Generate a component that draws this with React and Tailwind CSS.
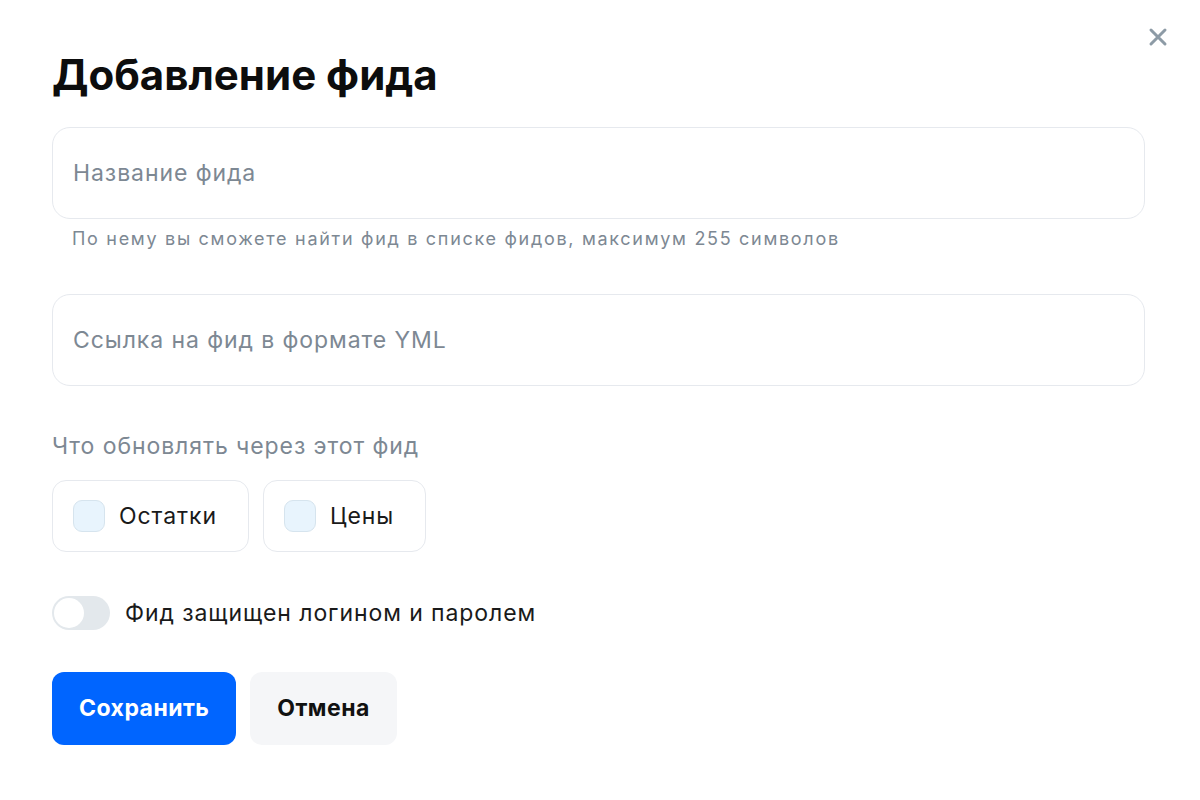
import { useState } from "react";

const Field = ({ placeholder, hint }) => (
  <div className="flex flex-col">
    <input
      placeholder={placeholder}
      className="h-[92px] w-full rounded-[18px] border border-[#e6e9ee] bg-white px-5 text-[23px] tracking-[0.04em] text-[#1a1a1a] outline-none placeholder:text-[#7d8893]"
    />
    {hint ? (
      <p className="mt-[10px] pl-5 text-[18px] leading-5 tracking-[1.7px] text-[#7d8893]">{hint}</p>
    ) : null}
  </div>
);

const CheckCard = ({ label }) => {
  const [checked, setChecked] = useState(false);
  return (
    <button
      type="button"
      onClick={() => setChecked(!checked)}
      className="flex h-[72px] items-center gap-[14px] rounded-[14px] border border-[#e6e9ee] bg-white pl-5 pr-[31px]"
    >
      <span
        className={
          checked
            ? "h-8 w-8 rounded-[9px] border border-[#0065ff] bg-[#0065ff]"
            : "h-8 w-8 rounded-[9px] border border-[#d6e4ee] bg-[#e8f4fd]"
        }
      ></span>
      <span className="text-[23px] leading-6 tracking-[0.04em] text-[#1a1a1a]">{label}</span>
    </button>
  );
};

const App = () => {
  return (
    <div
      className="relative min-h-[800px] w-[1200px] bg-white"
      style={{ fontFamily: "Inter, 'Noto Sans', sans-serif" }}
    >
      <button className="absolute right-[30px] top-[25px] text-[#8d9ba6]" type="button">
        <svg width="24" height="24" viewBox="0 0 24 24" fill="none">
          <path d="M5 5L19 19M19 5L5 19" stroke="currentColor" strokeWidth="3" strokeLinecap="round" />
        </svg>
      </button>

      <div className="flex flex-col pl-[52px] pr-[55px] pt-[51px]">
        <h1 className="text-[42px] font-bold leading-[48px] text-[#0d0d0d]">Добавление фида</h1>

        <div className="mt-[28px] flex flex-col gap-[45px]">
          <Field
            placeholder="Название фида"
            hint="По нему вы сможете найти фид в списке фидов, максимум 255 символов"
          />
          <Field placeholder="Ссылка на фид в формате YML" />
        </div>

        <p className="mt-[48px] text-[23px] leading-6 tracking-[0.04em] text-[#7d8893]">
          Что обновлять через этот фид
        </p>

        <div className="mt-[22px] flex gap-[14px]">
          <CheckCard label="Остатки" />
          <CheckCard label="Цены" />
        </div>

        <label className="mt-[44px] flex items-center gap-[15px]">
          <span className="relative h-[34px] w-[58px] rounded-full bg-[#e3e8ec]">
            <span className="absolute left-[2px] top-[2px] h-[30px] w-[30px] rounded-full bg-white"></span>
          </span>
          <span className="text-[23px] leading-[34px] tracking-[0.04em] text-[#1a1a1a]">
            Фид защищен логином и паролем
          </span>
        </label>

        <div className="mt-[42px] flex gap-[14px]">
          <button
            type="button"
            className="h-[73px] rounded-[12px] bg-[#0065ff] px-[27px] text-[23px] font-bold tracking-[0.02em] text-white"
          >
            Сохранить
          </button>
          <button
            type="button"
            className="h-[73px] rounded-[12px] bg-[#f5f6f8] px-[27px] text-[23px] font-bold tracking-[0.02em] text-[#111]"
          >
            Отмена
          </button>
        </div>
      </div>
    </div>
  );
};

export default App;
